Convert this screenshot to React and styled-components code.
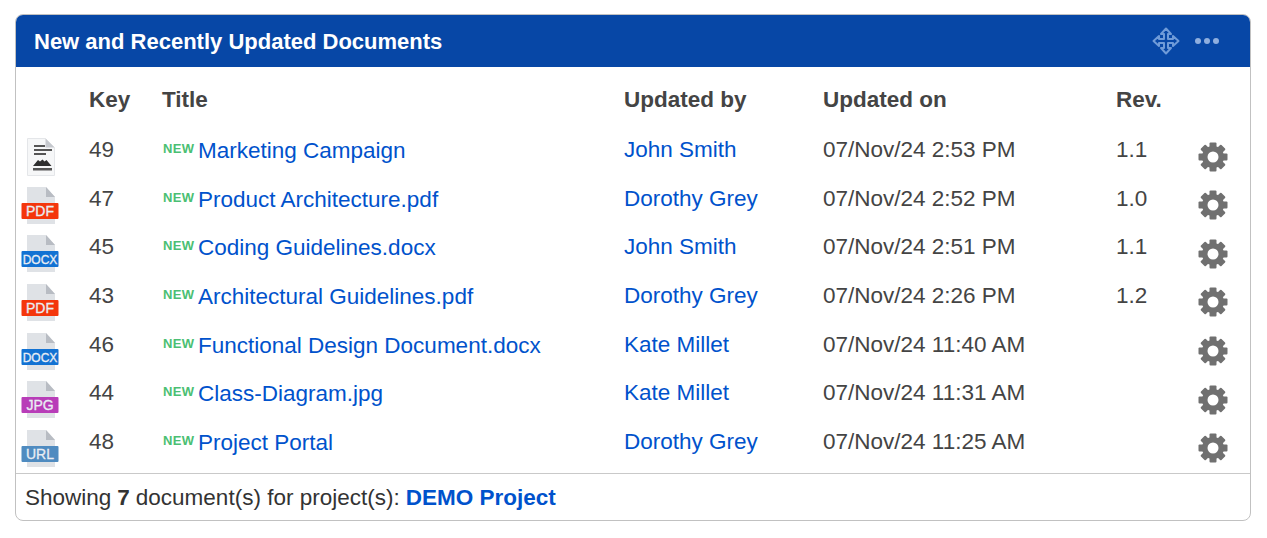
import React from "react";
import styled, { createGlobalStyle } from "styled-components";

const GlobalStyle = createGlobalStyle`
  html, body {
    margin: 0;
    padding: 0;
    background: #fff;
    font-family: "Liberation Sans", Arial, sans-serif;
  }
`;

const Page = styled.div`
  padding: 14px 16px 0 15px;
`;

const Card = styled.section`
  height: 507px;
  box-sizing: border-box;
  border: 1px solid #c1c1c1;
  border-radius: 8px;
  overflow: hidden;
  display: flex;
  flex-direction: column;
`;

const CardHeader = styled.header`
  height: 52px;
  flex: none;
  padding: 0 30px 0 18px;
  display: flex;
  align-items: center;
  justify-content: space-between;
  background: #0747a6;
`;

const CardTitle = styled.h2`
  margin: 1px 0 0;
  font-size: 22px;
  font-weight: 700;
  color: #fff;
`;

const HeaderTools = styled.div`
  display: flex;
  align-items: center;
  gap: 14px;
`;

const Table = styled.div`
  flex: 1;
  padding-top: 8px;
  display: flex;
  flex-direction: column;
`;

const Row = styled.div`
  height: ${({ $head }) => ($head ? "49px" : "48.67px")};
  flex: none;
  display: grid;
  grid-template-columns: 73px 73px 462px 199px 293px 82px 1fr;
  align-items: center;
  font-size: 22.5px;
  font-weight: ${({ $head }) => ($head ? 700 : 400)};
  color: #444;
  white-space: nowrap;
`;

const IconCell = styled.div`
  display: flex;
  padding: 14px 0 0 5px;
`;

const TitleCell = styled.div`
  display: flex;
  align-items: center;
  gap: 3px;
  padding-top: 2px;
`;

const NewTag = styled.span`
  width: 32px;
  margin-top: -5px;
  padding-left: 1px;
  font-size: 13px;
  font-weight: 700;
  letter-spacing: 0.3px;
  color: #4bbf73;
`;

const Link = styled.a`
  color: #0052cc;
  text-decoration: none;
`;

const GearCell = styled.div`
  display: flex;
  padding-top: 13px;
`;

const CardFooter = styled.footer`
  height: 47px;
  flex: none;
  box-sizing: border-box;
  padding: 1px 0 0 9px;
  display: flex;
  align-items: center;
  border-top: 1px solid #c9c9c9;
  font-size: 22.5px;
  color: #333;
`;

const Count = styled.strong`
  margin: 0 6px;
`;

const ProjectLink = styled(Link)`
  margin-left: 6px;
  font-weight: 700;
`;

const MoveIcon = () => (
  <svg width="28" height="28" viewBox="0 0 28 28" fill="none">
    <path
      d="M14 1.500l5 5.500h-3v5h5v-3l5.500 5-5.500 5v-3h-5v5h3l-5 5.500-5-5.500h3v-5h-5v3L1.500 14 7 9v3h5V7H9z"
      stroke="#6f9bd8"
      strokeWidth="2"
      strokeLinejoin="round"
    />
  </svg>
);

const DotsIcon = () => (
  <svg width="26" height="8" viewBox="0 0 26 8" fill="#8fafdf">
    <circle cx="4" cy="4" r="3" />
    <circle cx="13" cy="4" r="3" />
    <circle cx="22" cy="4" r="3" />
  </svg>
);

const GearIcon = () => (
  <svg width="30" height="30" viewBox="0 0 30 30">
    <g fill="#707070">
      {[0, 45, 90, 135].map((angle) => (
        <rect key={angle} x="11.500" y="0.500" width="7" height="29" rx="1" transform={`rotate(${angle} 15 15)`} />
      ))}
      <circle cx="15" cy="15" r="11" />
    </g>
    <circle cx="15" cy="15" r="5.500" fill="#fff" />
  </svg>
);

const DocIcon = () => (
  <svg width="38" height="38" viewBox="0 0 38 38">
    <path d="M6.500 0.500h18l9 9v28h-27z" fill="#f6f7f8" stroke="#e4e6e9" />
    <path d="M24.500 0.500l9 9h-9z" fill="#c5c8cd" />
    <path d="M13 7h11v2H13zM13 11h18v2H13zM13 15h12v2H13zM12 30h19v2.500H12z" fill="#555" />
    <path d="M12 28l5-6 2 1.500 2.500-2 2 2 2-1.500 5 6z" fill="#2f2f2f" />
  </svg>
);

const FileIcon = ({ label, color }) => (
  <svg width="38" height="38" viewBox="0 0 38 38">
    <path d="M6 0h19l9 10v27H6z" fill="#dfe2e6" />
    <path d="M25 0l9 10h-9z" fill="#b8bcc3" />
    <rect x="0.500" y="16" width="37" height="16" rx="1" fill={color} />
    <text
      x="19"
      y="29"
      textAnchor="middle"
      fontFamily="Liberation Sans, sans-serif"
      fontSize={label.length > 3 ? 12 : 14}
      fill="#e9edf3"
      stroke="#e9edf3"
      strokeWidth="0.300"
    >
      {label}
    </text>
  </svg>
);

const documents = [
  { key: 49, title: "Marketing Campaign", by: "John Smith", on: "07/Nov/24 2:53 PM", rev: "1.1" },
  { key: 47, title: "Product Architecture.pdf", by: "Dorothy Grey", on: "07/Nov/24 2:52 PM", rev: "1.0", label: "PDF", color: "#f4360c" },
  { key: 45, title: "Coding Guidelines.docx", by: "John Smith", on: "07/Nov/24 2:51 PM", rev: "1.1", label: "DOCX", color: "#1272d3" },
  { key: 43, title: "Architectural Guidelines.pdf", by: "Dorothy Grey", on: "07/Nov/24 2:26 PM", rev: "1.2", label: "PDF", color: "#f4360c" },
  { key: 46, title: "Functional Design Document.docx", by: "Kate Millet", on: "07/Nov/24 11:40 AM", rev: "", label: "DOCX", color: "#1272d3" },
  { key: 44, title: "Class-Diagram.jpg", by: "Kate Millet", on: "07/Nov/24 11:31 AM", rev: "", label: "JPG", color: "#b83db8" },
  { key: 48, title: "Project Portal", by: "Dorothy Grey", on: "07/Nov/24 11:25 AM", rev: "", label: "URL", color: "#4f8bc0" },
];

const App = () => (
  <Page>
    <GlobalStyle />
    <Card>
      <CardHeader>
        <CardTitle>New and Recently Updated Documents</CardTitle>
        <HeaderTools>
          <MoveIcon />
          <DotsIcon />
        </HeaderTools>
      </CardHeader>
      <Table>
        <Row $head>
          <div />
          <div>Key</div>
          <div>Title</div>
          <div>Updated by</div>
          <div>Updated on</div>
          <div>Rev.</div>
          <div />
        </Row>
        {documents.map((doc) => (
          <Row key={doc.key}>
            <IconCell>{doc.label ? <FileIcon label={doc.label} color={doc.color} /> : <DocIcon />}</IconCell>
            <div>{doc.key}</div>
            <TitleCell>
              <NewTag>NEW</NewTag>
              <Link href="#">{doc.title}</Link>
            </TitleCell>
            <div>
              <Link href="#">{doc.by}</Link>
            </div>
            <div>{doc.on}</div>
            <div>{doc.rev}</div>
            <GearCell>
              <GearIcon />
            </GearCell>
          </Row>
        ))}
      </Table>
      <CardFooter>
        Showing<Count>7</Count>document(s) for project(s):
        <ProjectLink href="#">DEMO Project</ProjectLink>
      </CardFooter>
    </Card>
  </Page>
);

export default App;
